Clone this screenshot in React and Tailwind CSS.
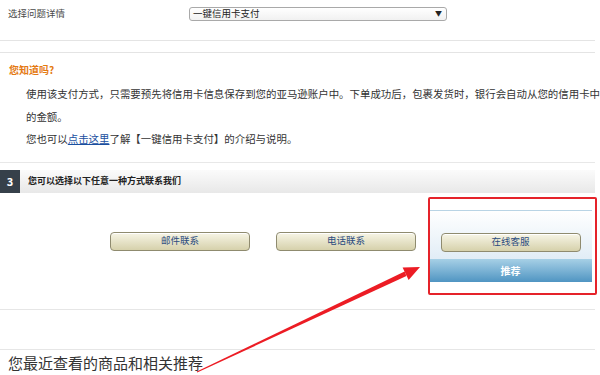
import React from 'react'

function ContactButton({ label }) {
  return (
    <div className="mx-auto flex h-[19px] w-[140px] items-center justify-center rounded-[4px] border border-[#8f8b6f] bg-gradient-to-b from-[#f7f5e6] to-[#d6d1ab] text-[9.5px] leading-none text-[#2b4c80] shadow-[inset_0_1px_0_#fff]">
      {label}
    </div>
  )
}

function ContactColumn({ label, recommended }) {
  if (recommended) {
    return (
      <div className="w-[163px] pt-[17px]">
        <div className="border-t border-[#b9d4e5] bg-gradient-to-b from-white to-[#e1edf6] pt-[22px] pb-[7px]">
          <ContactButton label={label} />
        </div>
        <div className="flex h-[23px] items-center justify-center bg-gradient-to-b from-[#a6d0e6] to-[#4f95c2] text-[10px] font-bold text-white">
          推荐
        </div>
      </div>
    )
  }
  return (
    <div className="w-[166px] pt-[39px]">
      <ContactButton label={label} />
    </div>
  )
}

export default function App() {
  return (
    <div className="relative h-[375px] w-[600px] overflow-hidden bg-white font-['Noto_Sans_CJK_SC',sans-serif]">
      {/* Issue selector */}
      <div className="flex h-[27px] items-center">
        <span className="w-[189px] pl-[8px] text-[9.5px] text-[#4a4a4a]">选择问题详情</span>
        <div className="flex h-[14px] w-[258px] items-center justify-between rounded-[3px] border border-[#a9a9a9] bg-gradient-to-b from-white to-[#f1f1f1] pl-[3px] pr-[4px]">
          <span className="text-[9.5px] leading-none text-[#222]">一键信用卡支付</span>
          <span className="text-[7px] leading-none text-[#222]">▼</span>
        </div>
      </div>
      <div className="mt-[13px] w-[595px] border-t border-[#e4e4e4]" />
      <div className="mt-[11px] w-[595px] border-t border-[#e4e4e4]" />

      {/* Did you know */}
      <div className="mt-[10px] pl-[9px] text-[10px] font-bold leading-[14px] text-[#e47911]">您知道吗?</div>
      <div className="mt-[6px] whitespace-nowrap pl-[26px] text-[10.45px] leading-[22.5px] text-[#333]">
        <p>使用该支付方式，只需要预先将信用卡信息保存到您的亚马逊账户中。下单成功后，包裹发货时，银行会自动从您的信用卡中扣除</p>
        <p>的金额。</p>
        <p>
          您也可以<span className="text-[#1a4fa0] underline">点击这里</span>了解【一键信用卡支付】的介绍与说明。
        </p>
      </div>
      <div className="mt-[11px] w-[595px] border-t border-[#e8e8e8]" />

      {/* Step 3 header */}
      <div className="mt-[7px] flex h-[23px] w-[595px]">
        <div className="flex w-[20px] items-center justify-center bg-[#36404a] text-[11px] font-bold text-white">3</div>
        <div className="flex flex-1 items-center bg-gradient-to-b from-[#fbfbfb] to-[#e8e8e8] pl-[8px] text-[9px] font-bold text-[#222]">
          您可以选择以下任意一种方式联系我们
        </div>
      </div>

      {/* Contact options */}
      <div className="flex pl-[97px]">
        <ContactColumn label="邮件联系" />
        <ContactColumn label="电话联系" />
        <ContactColumn label="在线客服" recommended />
      </div>

      <div className="mt-[27px] w-[595px] border-t border-[#e6e6e6]" />
      <div className="mt-[39px] w-[595px] border-t border-[#e6e6e6]" />
      <div className="mt-[3px] pl-[8px] text-[15px] leading-[20px] text-[#333]">您最近查看的商品和相关推荐</div>

      {/* Annotation: red box and arrow */}
      <div className="pointer-events-none absolute left-[428px] top-[197px] h-[98px] w-[169px] rounded-[2px] border-2 border-[#e5232a]" />
      <svg className="pointer-events-none absolute left-0 top-0" width="600" height="375" viewBox="0 0 600 375">
        <polygon points="197.2,372.6 196.8,371.4 404.6,271.6 406.4,276.0" fill="#ec1c24" />
        <polygon points="420,267 408.6,280 402.6,267.6" fill="#ec1c24" />
      </svg>
    </div>
  )
}
